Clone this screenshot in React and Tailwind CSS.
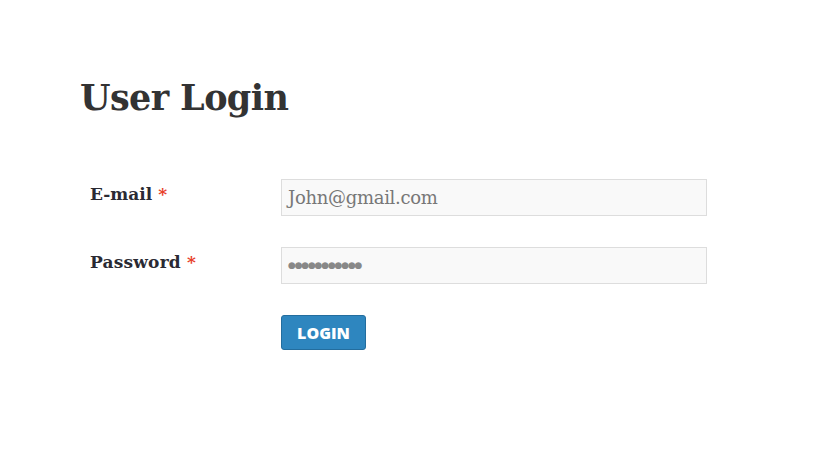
export default function App() {
  const serif = { fontFamily: '"DejaVu Serif", "Liberation Serif", serif' };
  return (
    <div className="w-[820px] h-[449px] bg-white" style={serif}>
      <div className="pt-[74px] pl-[80px]">
        <h1 className="text-[35px] leading-[48px] font-bold text-[#333] tracking-[-0.6px]">User Login</h1>
        <div className="mt-[57px] flex flex-col">
          <div className="flex items-start h-[37px]">
            <label className="w-[201px] pl-[10px] pt-[3px] text-[17px] font-bold text-[#2a2a33]">
              E-mail <span className="text-[#e8402a]">*</span>
            </label>
            <div className="w-[426px] h-[37px] bg-[#f9f9f9] border border-[#dddddd] flex items-center px-[6px] text-[18px] tracking-[-0.3px] text-[#777]">
              John@gmail.com
            </div>
          </div>
          <div className="flex items-start h-[37px] mt-[31px]">
            <label className="w-[201px] pl-[10px] pt-[3px] text-[17px] font-bold text-[#2a2a33] tracking-[0.2px]">
              Password <span className="text-[#e8402a]">*</span>
            </label>
            <div className="w-[426px] h-[37px] bg-[#f9f9f9] border border-[#dddddd] flex items-center px-[6px] text-[#888]">
              <span className="text-[9px] tracking-[-1.2px]" style={{ fontFamily: '"DejaVu Sans", sans-serif' }}>●●●●●●●●●●●</span>
            </div>
          </div>
          <div className="flex mt-[31px]">
            <div className="w-[201px]" />
            <button className="w-[85px] h-[35px] rounded-[3px] bg-[#2e86bf] border border-[#236d9e] text-white font-extrabold text-[16px] flex items-center justify-center" style={{ fontFamily: '"Open Sans", "Liberation Sans", sans-serif' }}>
              LOGIN
            </button>
          </div>
        </div>
      </div>
    </div>
  );
}
